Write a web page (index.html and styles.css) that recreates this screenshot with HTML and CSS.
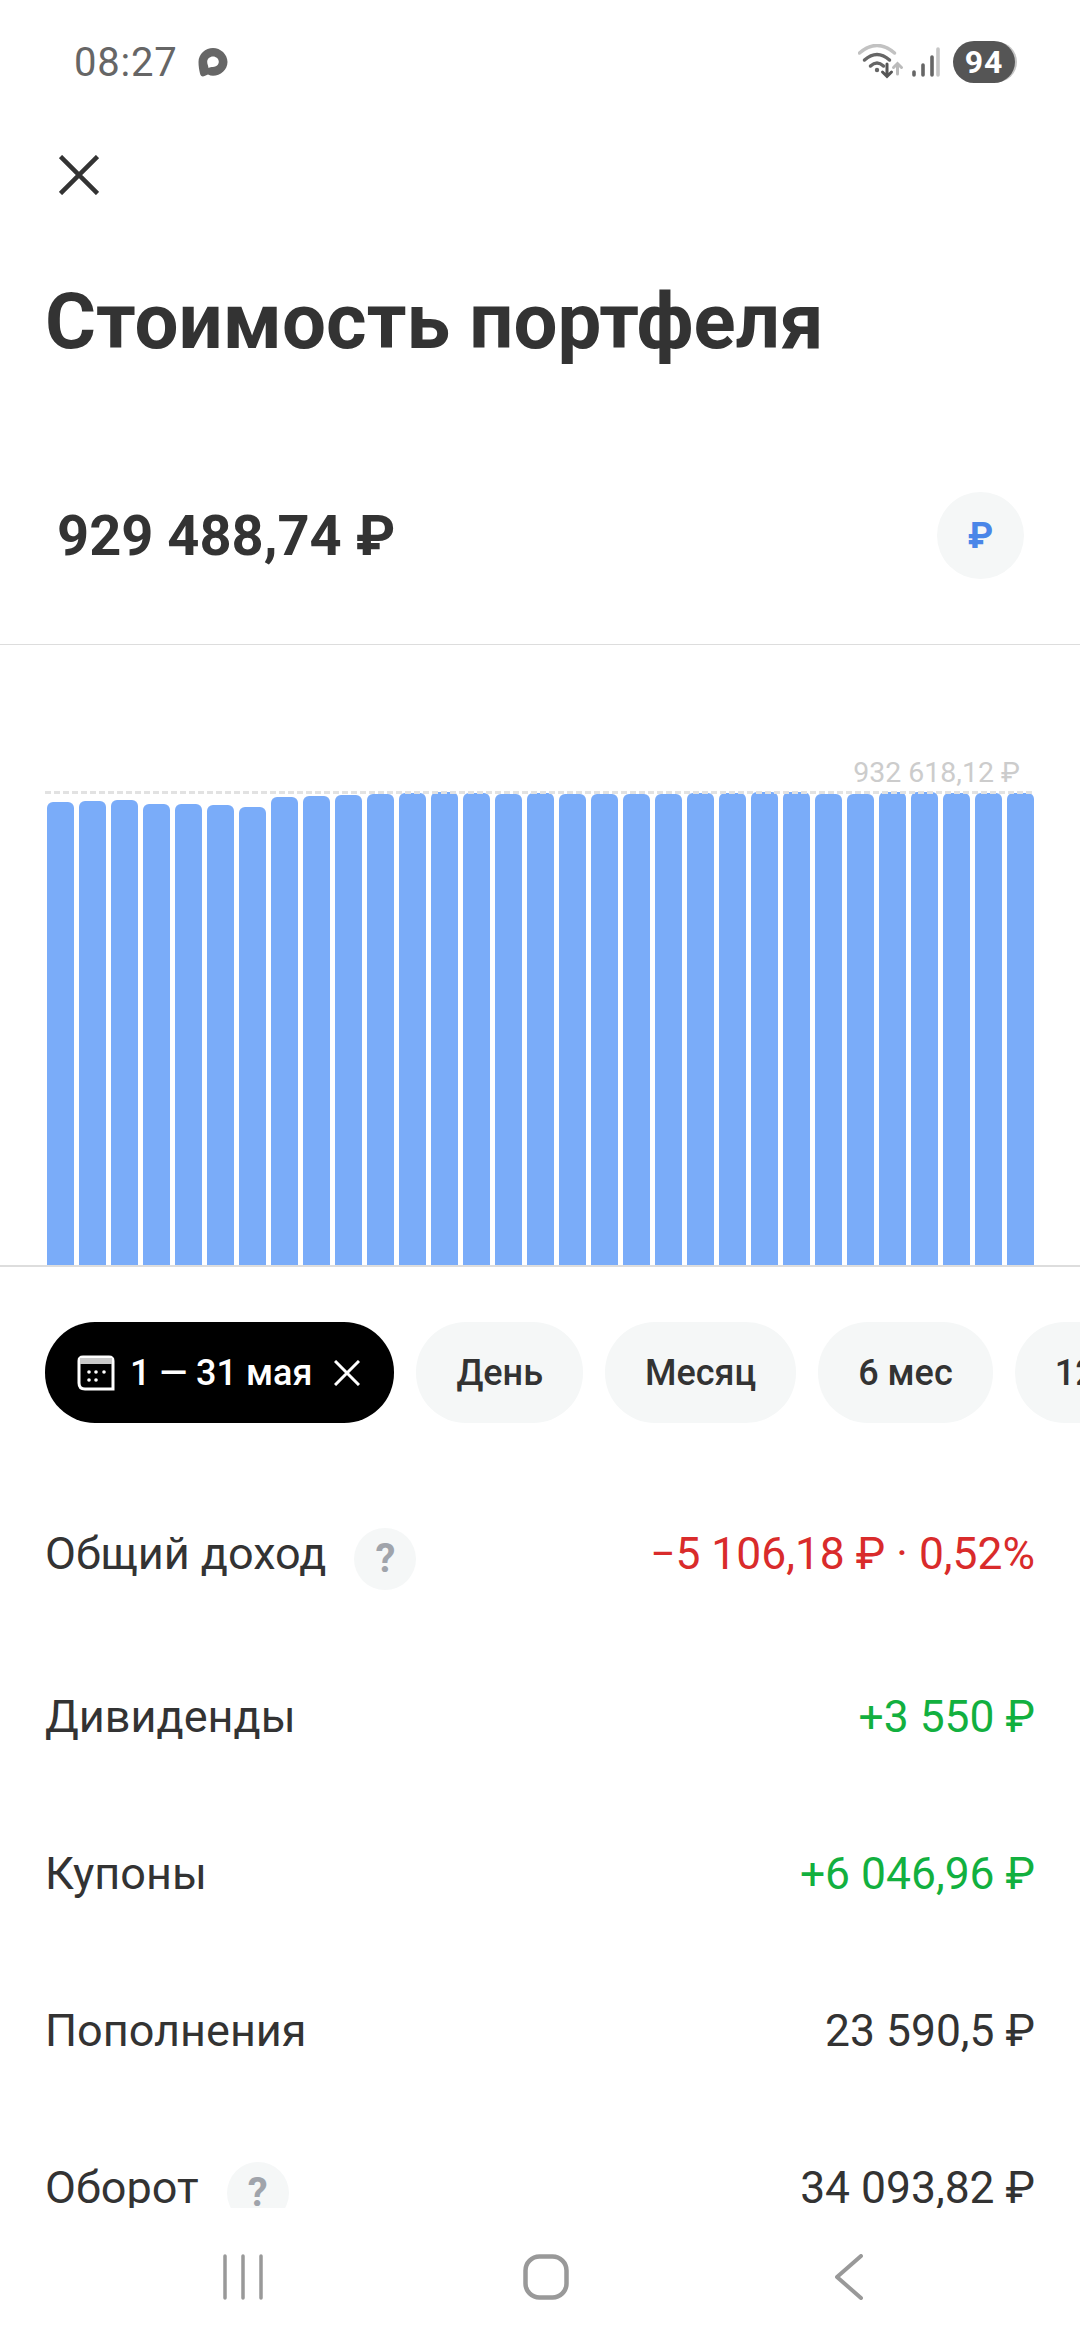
FILE: index.html
```html
<!DOCTYPE html>
<html lang="ru">
<head>
<meta charset="utf-8">
<title>Стоимость портфеля</title>
<link rel="stylesheet" href="styles.css">
</head>
<body>
<div class="screen">
  <header class="status">
    <div class="status-left">
      <span class="time">08:27</span>
      <svg class="msg" viewBox="0 0 32 32"><path d="M16 2C8.500 2 1.500 8 1.500 16c0 4 .7 8 1.500 11.500 .5 2.500 2.500 3.500 4.500 2.500l3.500-1.500c1.500.8 3.300 1.200 5 1.200 7.500 0 14.500-6 14.500-13.700S23.500 2 16 2zm0 8.500c3.200 0 5.800 2.400 5.800 5.300S19.200 21 16 21c-1.800 0-3 0-4.500 1-.3-2.500-1.300-3.800-1.300-6.200 0-2.900 2.600-5.300 5.800-5.300z" fill="#666"/></svg>
    </div>
    <div class="status-right">
      <svg class="wifi" viewBox="0 0 46 36" fill="none" stroke-linecap="round">
        <path d="M1.500 9Q19 -6 36.500 9" stroke="#c2c2c2" stroke-width="3.500"/>
        <path d="M6.500 16Q19 5 31.500 16" stroke="#666" stroke-width="3.500"/>
        <path d="M12.500 22Q19 16 25.500 22" stroke="#666" stroke-width="3.500"/>
        <circle cx="19" cy="26" r="2.200" fill="#666"/>
        <path d="M29 20V32M24.500 28L29 32.500L33.500 28" stroke="#555" stroke-width="3"/>
        <path d="M39.500 30V20M35.500 23.500L39.500 19.500L43.500 23.500" stroke="#bbb" stroke-width="3"/>
      </svg>
      <svg class="signal" viewBox="0 0 28 30" stroke-linecap="round" stroke-width="3.600" fill="none">
        <path d="M2 28V25M11 28V18M20 28V10" stroke="#666"/>
        <path d="M26 28V2" stroke="#c6c6c6"/>
      </svg>
      <div class="battery"><span class="battery-num">94</span></div>
    </div>
  </header>

  <button class="close" aria-label="Закрыть">
    <svg viewBox="0 0 40 40" fill="none" stroke="#333" stroke-width="4.500"><path d="M1.500 1.500L38.500 38.500M38.500 1.500L1.500 38.500"/></svg>
  </button>

  <h1 class="title">Стоимость портфеля</h1>

  <div class="total">
    <span class="total-value">929 488,74 ₽</span>
    <span class="currency">₽</span>
  </div>

  <section class="chart">
    <div class="chart-label">932 618,12 ₽</div>
    <div class="chart-max"></div>
    <div class="bars">
      <i class="bar" style="height:463px"></i><i class="bar" style="height:464px"></i><i class="bar" style="height:465px"></i><i class="bar" style="height:461px"></i><i class="bar" style="height:461px"></i><i class="bar" style="height:460px"></i><i class="bar" style="height:458px"></i><i class="bar" style="height:468px"></i><i class="bar" style="height:469px"></i><i class="bar" style="height:470px"></i><i class="bar" style="height:471px"></i><i class="bar" style="height:472px"></i><i class="bar" style="height:473px"></i><i class="bar" style="height:472px"></i><i class="bar" style="height:471px"></i><i class="bar" style="height:472px"></i><i class="bar" style="height:471px"></i><i class="bar" style="height:471px"></i><i class="bar" style="height:471px"></i><i class="bar" style="height:471px"></i><i class="bar" style="height:472px"></i><i class="bar" style="height:472px"></i><i class="bar" style="height:473px"></i><i class="bar" style="height:473px"></i><i class="bar" style="height:471px"></i><i class="bar" style="height:471px"></i><i class="bar" style="height:473px"></i><i class="bar" style="height:473px"></i><i class="bar" style="height:472px"></i><i class="bar" style="height:472px"></i><i class="bar" style="height:472px"></i>
    </div>
  </section>

  <div class="chips">
    <div class="chip chip-active">
      <svg class="cal" viewBox="0 0 38 36" fill="none">
        <path d="M6 2H32C34.500 2 36 3.500 36 6V34H8C4 34 2 32 2 28V6C2 3.500 3.500 2 6 2Z" stroke="#fff" stroke-width="3"/>
        <path d="M3 3H35V9H3Z" fill="#c9c9c9"/>
        <g fill="#fff"><circle cx="12" cy="17" r="1.800"/><circle cx="19" cy="17" r="1.800"/><circle cx="27" cy="17" r="1.800"/><circle cx="12" cy="25" r="1.800"/><circle cx="19" cy="25" r="1.800"/></g>
      </svg>
      <span class="chip-text">1 — 31 мая</span>
      <svg class="chip-x" viewBox="0 0 26 26" fill="none" stroke="#fff" stroke-width="3"><path d="M1 1L25 25M25 1L1 25"/></svg>
    </div>
    <div class="chip">День</div>
    <div class="chip">Месяц</div>
    <div class="chip">6 мес</div>
    <div class="chip">12 мес</div>
  </div>

  <main class="rows">
    <div class="row row-lead">
      <div class="row-label">Общий доход <span class="help">?</span></div>
      <div class="val val-red">−5 106,18 ₽ · 0,52%</div>
    </div>
    <div class="row">
      <div class="row-label">Дивиденды</div>
      <div class="val val-green">+3 550 ₽</div>
    </div>
    <div class="row">
      <div class="row-label">Купоны</div>
      <div class="val val-green">+6 046,96 ₽</div>
    </div>
    <div class="row">
      <div class="row-label">Пополнения</div>
      <div class="val">23 590,5 ₽</div>
    </div>
    <div class="row">
      <div class="row-label">Оборот <span class="help">?</span></div>
      <div class="val">34 093,82 ₽</div>
    </div>
  </main>

  <nav class="navbar">
    <svg class="nav-recent" viewBox="0 0 42 46" fill="none" stroke="#999" stroke-width="3.500" stroke-linecap="round"><path d="M3 2V44M21 2V44M39 2V44"/></svg>
    <svg class="nav-home" viewBox="0 0 46 46" fill="none" stroke="#999" stroke-width="4.500"><rect x="2.500" y="2.500" width="41" height="41" rx="14"/></svg>
    <svg class="nav-back" viewBox="0 0 28 46" fill="none" stroke="#999" stroke-width="4" stroke-linecap="round" stroke-linejoin="round"><path d="M26 2L2 23L26 44"/></svg>
  </nav>
</div>
</body>
</html>
```

FILE: styles.css
```css
* { box-sizing: border-box; }
html, body { margin: 0; padding: 0; background: #fff; }
body { font-family: Roboto, "Noto Sans", sans-serif; color: #333; }
.screen { width: 1080px; height: 2340px; display: flex; flex-direction: column; overflow: hidden; }

.status { height: 124px; flex: none; display: flex; justify-content: space-between; align-items: center; padding: 0 65px 0 74px; }
.status-left { display: flex; align-items: center; gap: 19px; }
.time { font-size: 40px; color: #666; letter-spacing: .8px; }
.msg { width: 32px; height: 32px; }
.status-right { display: flex; align-items: center; }
.wifi { width: 46px; height: 36px; }
.signal { width: 28px; height: 30px; margin-left: 8px; }
.battery { width: 62px; height: 42px; margin-left: 13px; border-radius: 21px; background: #555; box-shadow: 3px 0 0 -1px #c4c4c4; display: flex; align-items: center; justify-content: center; }
.battery-num { color: #fff; font-weight: 700; font-size: 32px; letter-spacing: 1px; }

.close { display: block; flex: none; width: 40px; height: 40px; margin: 31px 0 0 59px; padding: 0; border: 0; background: none; }
.close svg { display: block; width: 40px; height: 40px; }

.title { margin: 82px 0 0 45px; flex: none; font-size: 78px; line-height: 90px; font-weight: 700; color: #333; white-space: nowrap; }

.total { flex: none; margin-top: 125px; height: 87px; padding: 0 56px 0 57px; display: flex; justify-content: space-between; align-items: center; }
.total-value { font-size: 56px; font-weight: 700; }
.currency { width: 87px; height: 87px; border-radius: 50%; background: #f5f7f7; color: #4a86e8; font-size: 36px; font-weight: 700; display: flex; align-items: center; justify-content: center; }

.chart { flex: none; position: relative; margin-top: 65px; height: 623px; border-top: 1px solid #ddd; border-bottom: 2px solid #ddd; display: flex; align-items: flex-end; padding: 0 46px 0 47px; }
.bars { display: flex; align-items: flex-end; gap: 5px; width: 100%; }
.bar { flex: none; width: 27px; background: #7aacf9; border-radius: 6px 6px 0 0; }
.chart-label { position: absolute; top: 111px; right: 60px; font-size: 28.500px; line-height: 34px; color: #ccc; }
.chart-max { position: absolute; left: 45px; right: 46px; top: 146px; height: 3px; background: repeating-linear-gradient(90deg, #e2e2e2 0 6px, transparent 6px 9px); }

.chips { flex: none; margin-top: 55px; padding-left: 45px; display: flex; gap: 22px; overflow: hidden; }
.chip { flex: none; height: 101px; border-radius: 50px; padding: 0 40px; background: #f5f7f7; font-size: 36px; font-weight: 500; display: flex; align-items: center; color: #333; }
.chip-active { background: #000; color: #fff; padding: 0 34px 0 32px; }
.cal { width: 38px; height: 36px; margin-right: 15px; }
.chip-text { white-space: nowrap; }
.chip-x { width: 26px; height: 26px; margin-left: 22px; }

.rows { flex: 1; min-height: 0; overflow: hidden; padding: 0 45px; margin-top: 52px; font-size: 45px; }
.row { height: 157px; display: flex; justify-content: space-between; align-items: center; line-height: 52px; white-space: nowrap; }
.row-lead { height: 163px; padding-bottom: 6px; }
.row-label { display: flex; align-items: center; }
.help { width: 62px; height: 62px; margin-left: 28px; border-radius: 50%; background: #f5f7f7; color: #a0a4ab; font-size: 40px; font-weight: 700; display: flex; align-items: center; justify-content: center; transform: translateY(5px); }
.val { font-size: 44.400px; }
.val-red { color: #d92b2b; }
.val-green { color: #12b03f; }

.navbar { flex: none; height: 132px; background: #fff; position: relative; display: flex; align-items: flex-start; padding-top: 46px; }
.nav-recent { width: 42px; height: 46px; margin-left: 222px; }
.nav-home { width: 46px; height: 46px; margin-left: 259px; }
.nav-back { width: 28px; height: 46px; margin-left: 266px; }
```
